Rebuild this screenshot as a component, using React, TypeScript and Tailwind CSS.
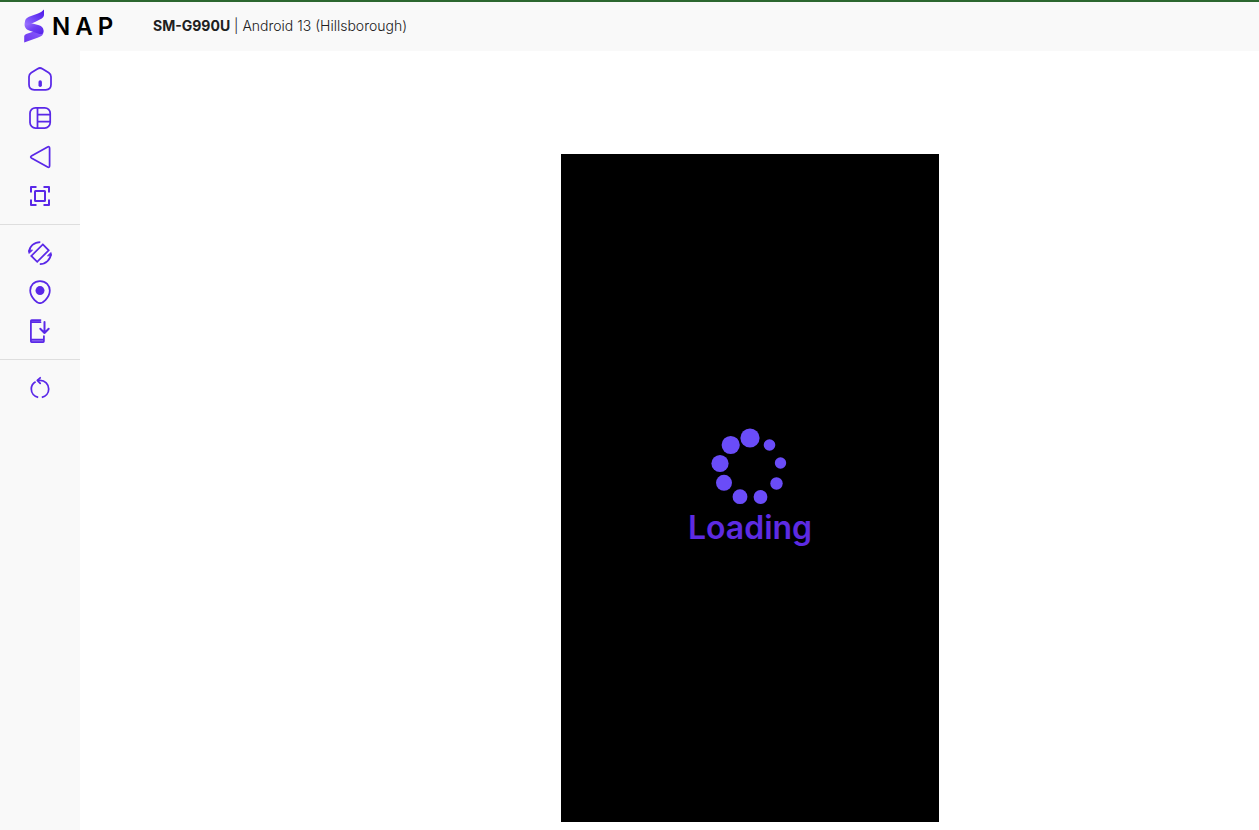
import type { ReactNode } from "react";

type Tool = { label: string; icon: ReactNode };

const groups: Tool[][] = [
  [
    {
      label: "Home",
      icon: (
        <>
          <path d="M9.7 1.7 3.2 5.8Q1 7.3 1 9.8V17.6Q1 22.8 6.2 22.8H17.8Q23 22.8 23 17.6V9.8Q23 7.3 20.8 5.8L14.3 1.7Q12 .3 9.7 1.7Z" />
          <path d="M12.2 15V18.2" strokeWidth="3.4" />
        </>
      ),
    },
    {
      label: "Recent apps",
      icon: (
        <>
          <rect x="2" y="1.8" width="20.2" height="20.2" rx="5.5" />
          <path d="M9.5 2V22M9.5 8.5H22M9.5 15.5H22" />
        </>
      ),
    },
    {
      label: "Back",
      icon: <path d="M19.6 2 3.8 10.7Q1.6 12 3.8 13.3L19.6 22Q21.6 23 21.6 20.6V3.4Q21.6 1 19.6 2Z" />,
    },
    {
      label: "Screenshot",
      icon: (
        <>
          <rect x="7" y="7" width="10" height="10" rx=".5" strokeWidth="2" />
          <path
            d="M3 8.5V3H8.5M15.5 3H21V8.5M21 15.5V21H15.5M8.5 21H3V15.5"
            strokeWidth="2"
            strokeLinecap="butt"
          />
        </>
      ),
    },
  ],
  [
    {
      label: "Rotate",
      icon: (
        <>
          <path d="M14.8 3.4 20.7 9.3 9.2 20.8 3.3 14.9Z" strokeLinejoin="miter" />
          <path d="M12.3 1C6.2 1 1.3 5.5 1.1 11M11.8 23C17.8 23 22.7 18.5 22.9 13" strokeLinecap="butt" />
          <path d="M.9 9.5V12.4L4.2 9.5ZM23.1 14.5V11.6L19.8 14.5Z" fill="currentColor" strokeWidth="1" />
        </>
      ),
    },
    {
      label: "Location",
      icon: (
        <>
          <path d="M12 1C6 1 2.2 5.2 2.2 10.6C2.2 14.6 4.2 17.6 6.6 20.2Q9.4 23.2 12 23.2T17.4 20.2C19.8 17.6 21.8 14.6 21.8 10.6C21.8 5.2 18 1 12 1Z" />
          <circle cx="12" cy="10.6" r="4.5" fill="currentColor" stroke="none" />
        </>
      ),
    },
    {
      label: "Install app",
      icon: (
        <>
          <path d="M3 1H12.5V3H3ZM3 20.8H16V23H3Z" fill="#ab90f3" stroke="none" />
          <path d="M12.5 1H3.6Q2.9 1 2.9 1.7V22.3Q2.9 23 3.6 23H15.2Q15.9 23 15.9 22.3V17M2.9 3.2H12.5M2.9 20.5H15.9" />
          <path d="M16.5 3V14M12.3 9.8 16.5 14 20.7 9.8" strokeWidth="2" />
        </>
      ),
    },
  ],
  [
    {
      label: "Restart",
      icon: (
        <>
          <path
            d="M10.2 21.4C6.2 20.6 3.3 17.2 3.3 13.1C3.3 9.9 5 7.1 7.6 5.7M13.8 21.4C17.8 20.6 20.7 17.2 20.7 13.1C20.7 8.3 16.9 4.4 12.1 4.4H9.5"
            strokeLinecap="butt"
          />
          <path d="M12.2 1.8 9.3 4.4 12.2 7.3" />
        </>
      ),
    },
  ],
];

const dots = [
  [39, 10, 9.6],
  [58.5, 17, 5.8],
  [69.5, 35, 5.7],
  [65.5, 55.5, 6.2],
  [49.5, 69, 6.9],
  [29, 68.7, 7.4],
  [13, 54.8, 8],
  [9, 35.5, 8.6],
  [19.7, 17, 9.1],
];

function Logo() {
  return (
    <a href="#" aria-label="SNAP" className="flex w-[129px] shrink-0 items-center pl-6">
      <svg viewBox="0 0 20 34" className="h-[34px] w-5" aria-hidden="true">
        <defs>
          <linearGradient id="top" x1="0" y1="1" x2="1" y2="0">
            <stop offset="0" stopColor="#9a72ff" />
            <stop offset=".5" stopColor="#6b3ff5" />
            <stop offset="1" stopColor="#4c16e8" />
          </linearGradient>
          <linearGradient id="middle" x1="0" y1="0" x2="1" y2="1">
            <stop offset="0" stopColor="#a984ff" />
            <stop offset=".5" stopColor="#7040f4" />
            <stop offset="1" stopColor="#5422e8" />
          </linearGradient>
          <linearGradient id="bottom" x1="1" y1="0" x2="0" y2="1">
            <stop offset="0" stopColor="#8e62ff" />
            <stop offset="1" stopColor="#6c35ee" />
          </linearGradient>
        </defs>
        <path d="M18.6 19C21 25 18 27.6 13.5 28.7L.2 33.5V27.3Q.2 25.6 2.2 24.9L14 21Q17 20.2 18.6 19Z" fill="url(#bottom)" />
        <path d="M1 12.5C-.5 18 2 20.6 6.5 22L14 24.4Q17.2 25.8 18.9 24.2C20.6 20.5 18.5 17.4 15 16.3L7.5 14.2Q3 13.1 1 12.5Z" fill="url(#middle)" />
        <path d="M20 .4V6.2Q19.8 8.3 17.8 9.4L11 13.1Q7.4 15 4.2 15.5Q.8 15.4 1 12.5Q1.2 9.5 5 7.8L14 4.4Q18 2.8 20 .4Z" fill="url(#top)" />
      </svg>
      <span aria-hidden="true" className="ml-2 flex gap-[5px] pt-0.5 text-2xl leading-8 font-semibold text-black">
        <span>N</span>
        <span>A</span>
        <span>P</span>
      </span>
    </a>
  );
}

export default function App() {
  return (
    <div className="flex min-h-screen flex-col bg-white font-['Inter',sans-serif] text-[#202020]">
      <header className="flex h-[51px] items-center gap-6 border-t-2 border-[#2c672f] bg-[#f9f9f9] pb-0.5">
        <Logo />
        <h1 className="text-sm font-light whitespace-nowrap">
          <strong className="font-bold">SM-G990U</strong> | Android 13 (Hillsborough)
        </h1>
      </header>

      <div className="flex flex-1">
        <nav aria-label="Device controls" className="w-20 shrink-0 divide-y divide-[#dedede] bg-[#f9f9f9]">
          {groups.map((tools) => (
            <div key={tools[0].label} className="flex flex-col items-center gap-[15px] py-4">
              {tools.map((tool) => (
                <button key={tool.label} type="button" aria-label={tool.label} className="size-6 text-[#5a28e8]">
                  <svg
                    viewBox="0 0 24 24"
                    fill="none"
                    stroke="currentColor"
                    strokeWidth="1.75"
                    strokeLinecap="round"
                    strokeLinejoin="round"
                    className="size-6"
                    aria-hidden="true"
                  >
                    {tool.icon}
                  </svg>
                </button>
              ))}
            </div>
          ))}
        </nav>

        <main className="flex flex-1 items-start justify-center pt-[103px] pb-2 pl-[161px]">
          <section
            aria-label="Device screen"
            className="flex aspect-[378/668] w-[378px] flex-col items-center justify-center bg-black pb-0.5"
          >
            <div role="status" className="flex flex-col items-center gap-1">
              <svg viewBox="0 0 78 77" className="h-[77px] w-[78px]" aria-hidden="true">
                {dots.map(([cx, cy, r]) => (
                  <circle key={`${cx}-${cy}`} cx={cx} cy={cy} r={r} fill="#6a4cf8" />
                ))}
              </svg>
              <p className="text-[32px] leading-[38px] font-semibold text-[#5d2be2]">Loading</p>
            </div>
          </section>
        </main>
      </div>
    </div>
  );
}
